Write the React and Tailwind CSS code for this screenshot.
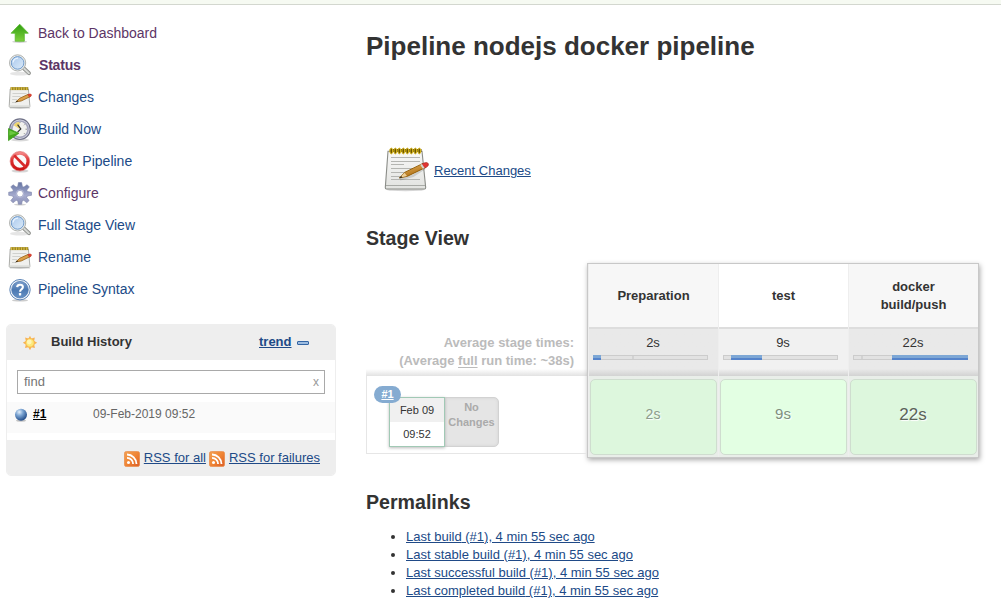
import React from "react";

const ArrowUp = () => (
  <svg width="24" height="24" viewBox="0 0 24 24" className="shrink-0">
    <defs>
      <linearGradient id="arrow" x1="0" y1="0" x2="0" y2="1">
        <stop offset="0" stopColor="#2f9e10" />
        <stop offset="1" stopColor="#7fd03c" />
      </linearGradient>
    </defs>
    <ellipse cx="11.7" cy="19.8" rx="7.5" ry="1.1" fill="#000" opacity=".18" />
    <path d="M11.7 2.2L20.3 11.2H16.3V19.2H7.2V11.2H3.1Z" fill="url(#arrow)" stroke="#56b82a" strokeWidth=".8" strokeLinejoin="round" />
  </svg>
);

const Magnifier = () => (
  <svg width="24" height="24" viewBox="0 0 24 24" className="shrink-0">
    <defs>
      <linearGradient id="lens" x1="0" y1="0" x2="1" y2="1">
        <stop offset="0" stopColor="#a9c8ec" />
        <stop offset="1" stopColor="#dcebfa" />
      </linearGradient>
    </defs>
    <ellipse cx="12" cy="19.7" rx="10" ry="1.9" fill="#000" opacity=".1" />
    <path d="M15.4 14L21 19.2" stroke="#8c8e8a" strokeWidth="3.8" strokeLinecap="round" />
    <path d="M16 14.6L20.9 19.2" stroke="#d7d9d6" strokeWidth="2" strokeLinecap="round" />
    <circle cx="9.6" cy="8.9" r="8.1" fill="#eceeec" stroke="#a8aaa7" strokeWidth=".9" />
    <circle cx="9.6" cy="8.9" r="6.3" fill="url(#lens)" stroke="#6f9acb" strokeWidth="1" />
    <path d="M5 8.5Q5.6 4.5 10 4.2" fill="none" stroke="#e9f3ff" strokeWidth="1.3" />
  </svg>
);

const SmallNotepad = () => (
  <svg width="24" height="24" viewBox="0 0 24 24" className="shrink-0">
    <ellipse cx="12" cy="21.9" rx="10.5" ry="1" fill="#000" opacity=".18" />
    <path d="M2.2 3H20.4L21.9 20.2Q21.9 21.3 21 21.3H2Q1.2 21.3 1.2 20.2Z" fill="#f0f0ee" stroke="#a3a4a0" strokeWidth=".9" />
    <path d="M1.6 19.3H21.6V21H1.6Z" fill="#dcddda" />
    <path d="M4.5 7.5H18.5M4.3 10.5H12.5M4.2 13.5H9M4 16.5H8" stroke="#d0d1ce" strokeWidth="1" />
    <path d="M2.5 2.6H20.3" stroke="#94802a" strokeWidth="3" />
    <path d="M3.5 1.2V3.9M6 1.2V3.9M8.5 1.2V3.9M11 1.2V3.9M13.5 1.2V3.9M16 1.2V3.9M18.7 1.2V3.9" stroke="#dcbf3a" strokeWidth="1.2" />
    <path d="M8 15.8L11.8 12.2L20.3 8.3L22 10.7L13.2 15Z" fill="#dda14b" stroke="#955e10" strokeWidth=".8" strokeLinejoin="round" />
    <path d="M7 16.4L9.2 14.6L10 15.6Z" fill="#29251c" />
    <path d="M19.8 8.6L21.4 8Q23.2 7.6 23.5 9Q23.5 10.3 21.5 11.2Z" fill="#e2432f" stroke="#b93229" strokeWidth=".5" />
  </svg>
);

const LargeNotepad = () => (
  <svg width="48" height="48" viewBox="0 0 48 48" className="shrink-0">
    <defs>
      <linearGradient id="paper" x1="0" y1="0" x2="0" y2="1">
        <stop offset="0" stopColor="#f8f8f7" />
        <stop offset="1" stopColor="#e2e3e0" />
      </linearGradient>
      <linearGradient id="wood" x1="0" y1="0" x2=".5" y2="1">
        <stop offset="0" stopColor="#f0bd66" />
        <stop offset="1" stopColor="#a8680f" />
      </linearGradient>
    </defs>
    <ellipse cx="23.5" cy="43.7" rx="19" ry="1.6" fill="#000" opacity=".16" />
    <path d="M6 5.2H40L43.7 41.6Q43.7 43 42.7 43H4.3Q3.3 43 3.3 41.6Z" fill="url(#paper)" stroke="#8b8d88" strokeWidth="1.1" />
    <path d="M4 39.5H43" stroke="#a8aaa6" strokeWidth="1" />
    <path d="M9 11.5H38M9 15.5H38M9 18.5H22M9 22.5H31M9 26.5H25M9 30.5H20M9 33.5H38" stroke="#b4b5b1" strokeWidth="1" />
    <path d="M7.8 4.5H39.5" stroke="#5c4b00" strokeWidth="3" />
    {[9.3, 13.3, 17.3, 21.3, 25.3, 29.3, 33.3, 37.3].map((x) => (
      <ellipse key={x} cx={x} cy="5" rx="1.4" ry="2.9" fill="#6b5600" stroke="#dcb91a" strokeWidth="1" />
    ))}
    <path d="M18 33.4L31 30L43 22" fill="none" stroke="#000" strokeWidth="2.4" opacity=".13" />
    <path d="M17.4 32L22.6 26.4L41 17.4L43.6 21.4L25.6 30.2Z" fill="url(#wood)" stroke="#8f5902" strokeWidth=".9" strokeLinejoin="round" />
    <path d="M17.6 31.8L22.5 26.8L25 30Z" fill="#edcf98" />
    <path d="M17.1 32.2L19.3 29.9L20.4 31.4Z" fill="#29251c" />
    <path d="M39.8 18L42 17Q45 15.7 46.4 17.7Q46.9 19.9 44.6 21.1L42.4 22.2Z" fill="#e23432" stroke="#a72c22" strokeWidth=".7" />
    <path d="M38.2 18.8L40 17.9L42.6 21.9L40.8 22.8Z" fill="#d5d5cf" />
  </svg>
);

const BuildClock = () => (
  <svg width="24" height="24" viewBox="0 0 24 24" className="shrink-0">
    <ellipse cx="12" cy="22.1" rx="9" ry="1.4" fill="#000" opacity=".15" />
    <circle cx="11.9" cy="11.2" r="10.3" fill="#d9dae6" stroke="#6f7187" strokeWidth="1.1" />
    <circle cx="11.9" cy="11.2" r="8.2" fill="#f1f1ee" stroke="#a5a6bd" strokeWidth="1.7" />
    <path d="M11.6 11L5.6 7.3Q7.5 3.9 11.6 3.9Z" fill="#eed46d" />
    <path d="M9.6 6.6L12.8 10.9L9.6 14.2" fill="none" stroke="#343634" strokeWidth="1.2" />
    <path d="M17.5 11.2H19M12 4.1V5M16.8 6.4L16 7.2M17 16.2L16 15.2" stroke="#92938f" />
    <path d="M.5 10.6L10.9 15.2L.5 22.6Z" fill="#43a91b" stroke="#3c9a1c" strokeWidth=".8" />
    <path d="M1.4 12.2L8.6 15.3L1.4 17.4Z" fill="#83d956" opacity=".65" />
  </svg>
);

const NoEntry = () => (
  <svg width="24" height="24" viewBox="0 0 24 24" className="shrink-0">
    <defs>
      <linearGradient id="ban" x1="0" y1="0" x2="0" y2="1">
        <stop offset="0" stopColor="#f38484" />
        <stop offset=".45" stopColor="#dc3030" />
        <stop offset="1" stopColor="#cc1515" />
      </linearGradient>
    </defs>
    <ellipse cx="12" cy="21" rx="8.5" ry="1.6" fill="#000" opacity=".16" />
    <circle cx="11.9" cy="11.2" r="8.1" fill="#fafafa" stroke="url(#ban)" strokeWidth="3.1" />
    <path d="M6.2 5.4L17.6 17" stroke="#d92b2b" strokeWidth="2.7" />
    <circle cx="11.9" cy="11.2" r="9.8" fill="none" stroke="#d85050" strokeWidth=".5" />
  </svg>
);

const Gear = () => (
  <svg width="24" height="24" viewBox="0 0 24 24" className="shrink-0">
    <defs>
      <linearGradient id="gear" x1="0" y1="0" x2="0" y2="1">
        <stop offset="0" stopColor="#6676a4" />
        <stop offset=".6" stopColor="#a6abce" />
        <stop offset="1" stopColor="#8c92b8" />
      </linearGradient>
    </defs>
    <ellipse cx="12" cy="22.6" rx="6" ry="1" fill="#000" opacity=".18" />
    <path
      fill="url(#gear)"
      stroke="#7d85ab"
      strokeWidth=".6"
      strokeLinejoin="round"
      fillRule="evenodd"
      d="M10.4 .6H13.6L14.4 4.5L15.9 5.1L19.1 2.7L21.3 4.9L18.8 8.1L19.4 9.6L23.5 10.2V13.3L19.4 14L18.7 15.5L21.1 18.6L18.8 20.8L15.8 18.3L14.2 18.9L13.6 22.3H10.4L9.8 18.9L8.2 18.3L5 20.8L2.8 18.6L5.3 15.5L4.7 14L.7 13.3V10.2L4.7 9.6L5.3 8.1L2.8 4.9L5 2.7L8.2 5.1L9.7 4.5ZM12 8.4A3.3 3.3 0 1 0 12 15A3.3 3.3 0 1 0 12 8.4Z"
    />
    <circle cx="12" cy="11.7" r="3.8" fill="none" stroke="#b9bdd9" strokeWidth=".8" />
  </svg>
);

const HelpIcon = () => (
  <svg width="24" height="24" viewBox="0 0 24 24" className="shrink-0">
    <defs>
      <linearGradient id="help" x1="0" y1="0" x2="0" y2="1">
        <stop offset="0" stopColor="#7d9fcc" />
        <stop offset=".5" stopColor="#4c79b2" />
        <stop offset="1" stopColor="#6591c5" />
      </linearGradient>
    </defs>
    <ellipse cx="12" cy="22.4" rx="8" ry="1.2" fill="#000" opacity=".2" />
    <circle cx="12" cy="11.7" r="10.2" fill="#f2f6fb" stroke="#5a83b6" strokeWidth="1" />
    <circle cx="12" cy="11.7" r="8.3" fill="url(#help)" stroke="#4874ad" strokeWidth=".7" />
    <path d="M9.1 9.2Q9.3 6.7 12 6.7Q14.9 6.7 14.9 9.1Q14.9 10.5 13.3 11.5Q12.1 12.3 12.1 13.7" fill="none" stroke="#fff" strokeWidth="2.1" />
    <rect x="10.9" y="15.1" width="2.3" height="2.3" rx=".4" fill="#fff" />
  </svg>
);

const Sun = () => (
  <svg width="16" height="16" viewBox="0 0 16 16" className="shrink-0">
    <path
      d="M8 .8L9.3 3.6L12.8 2.6L12.2 5.9L15.2 7.8L12.2 9.6L12.9 12.9L9.5 12.2L8 15.2L6.4 12.2L3 13L3.8 9.6L.8 7.8L3.8 5.9L3.1 2.6L6.5 3.5Z"
      fill="#f7b352"
    />
    <circle cx="8" cy="7.9" r="4.2" fill="#fce97a" stroke="#f9bb4c" strokeWidth=".8" />
    <circle cx="7.3" cy="7" r="2.4" fill="#fff9c4" opacity=".8" />
  </svg>
);

const BlueBall = () => (
  <svg width="14" height="14" viewBox="0 0 14 14" className="shrink-0">
    <defs>
      <radialGradient id="ball" cx=".36" cy=".28" r=".75">
        <stop offset="0" stopColor="#e3effb" />
        <stop offset=".4" stopColor="#7ca5d3" />
        <stop offset="1" stopColor="#204a87" />
      </radialGradient>
    </defs>
    <ellipse cx="7" cy="12.6" rx="5" ry="1.2" fill="#000" opacity=".22" />
    <circle cx="7" cy="6.7" r="6" fill="url(#ball)" />
  </svg>
);

const Rss = () => (
  <svg width="16" height="16" viewBox="0 0 16 16" className="shrink-0">
    <defs>
      <linearGradient id="rss" x1="0" y1="0" x2="1" y2="1">
        <stop offset="0" stopColor="#f3a153" />
        <stop offset=".5" stopColor="#ef8535" />
        <stop offset="1" stopColor="#db5c25" />
      </linearGradient>
    </defs>
    <rect x=".4" y=".4" width="15.2" height="15.2" rx="2.2" fill="url(#rss)" stroke="#ea8a45" strokeWidth=".7" />
    <circle cx="4.5" cy="11.6" r="1.5" fill="#fff" />
    <path d="M3 6.9A6.1 6.1 0 0 1 9.1 13M3 3.5A9.5 9.5 0 0 1 12.5 13" fill="none" stroke="#fff" strokeWidth="1.8" />
  </svg>
);

const tasks = [
  { label: "Back to Dashboard", Icon: ArrowUp, tone: "text-[#5c3566]" },
  { label: "Status", Icon: Magnifier, tone: "text-[#5c3566] font-bold pl-px tracking-[-0.2px]" },
  { label: "Changes", Icon: SmallNotepad, tone: "text-[#204a87]" },
  { label: "Build Now", Icon: BuildClock, tone: "text-[#204a87]" },
  { label: "Delete Pipeline", Icon: NoEntry, tone: "text-[#204a87]" },
  { label: "Configure", Icon: Gear, tone: "text-[#5c3566]" },
  { label: "Full Stage View", Icon: Magnifier, tone: "text-[#204a87]" },
  { label: "Rename", Icon: SmallNotepad, tone: "text-[#204a87]" },
  { label: "Pipeline Syntax", Icon: HelpIcon, tone: "text-[#204a87]" },
];

const stages = [
  {
    name: "Preparation",
    avg: "2s",
    size: "text-[14px] text-[#8c9c8c]",
    head: "bg-[#f7f7f7]",
    mid: "from-[#e9e9e9]",
    cell: "bg-[#ddf7dd]",
    start: 0,
    width: 8,
    tick: 38,
  },
  {
    name: "test",
    avg: "9s",
    size: "text-[15px] text-[#7f8f7f]",
    head: "bg-white",
    mid: "from-[#f1f1f1]",
    cell: "bg-[#e3ffe3]",
    start: 8,
    width: 31,
    tick: 7,
  },
  {
    name: "docker build/push",
    avg: "22s",
    size: "text-[17px] text-[#5a635a]",
    head: "bg-[#f7f7f7]",
    mid: "from-[#e9e9e9]",
    cell: "bg-[#ddf7dd]",
    start: 39,
    width: 76,
    tick: 7,
  },
];

const permalinks = ["Last build", "Last stable build", "Last successful build", "Last completed build"];

function BuildHistory() {
  return (
    <section className="mt-[19px] ml-1.5 h-[152px] w-[330px] overflow-hidden rounded-[5px] border border-[#eee] bg-white">
      <div className="flex h-[35px] items-center bg-[#eee] pl-[15px]">
        <div className="mt-px">
          <Sun />
        </div>
        <b className="mt-[-2px] ml-[13px] w-[208px] text-[13px] text-[#333]">Build History</b>
        <a className="mt-[-2px] text-[13px] font-bold text-[#204a87] underline">trend</a>
        <span className="ml-[5px] h-1 w-3 rounded-[1px] border border-[#3465a4] bg-[#9dbce0]" />
      </div>
      <div className="h-[80px] pt-[10px]">
        <div className="mx-[10px] flex h-6 items-center justify-between border border-[#a9a9a9] px-[6px] text-[13px]">
          <span className="text-[#757575]">find</span>
          <span className="mr-[-1px] text-[12px] text-[#999]">x</span>
        </div>
        <div className="mt-2 flex h-[31px] items-start bg-[#fafafa] pt-[4px] pl-[7px] text-[12px] leading-4">
          <div className="mt-[2px]">
            <BlueBall />
          </div>
          <b className="ml-[5px] w-[60px] text-black underline">#1</b>
          <span className="text-[#666]">09-Feb-2019 09:52</span>
        </div>
      </div>
      <div className="flex h-[36px] items-center justify-end bg-[#eee] pr-[15px] text-[13px] text-[#204a87]">
        <span className="mt-[2px] mr-1"><Rss /></span>
        <a className="underline">RSS for all</a>
        <span className="mt-[2px] mr-1 ml-[3px]"><Rss /></span>
        <a className="underline">RSS for failures</a>
      </div>
    </section>
  );
}

function RunSummary() {
  return (
    <div className="w-[221px] pt-16">
      <div className="flex h-[49px] flex-col items-end pt-[7px] pr-[13px] text-[13px] leading-[18px] font-bold text-[#bbb]">
        <span>Average stage times:</span>
        <span>
          (Average <span className="underline underline-offset-2">full</span> run time: ~38s)
        </span>
      </div>
      <div className="-mt-[7px] h-[7px] bg-linear-to-b from-transparent to-[#e2e2e2]" />
      <div className="relative flex h-[78px] border-b border-l border-[#e6e6e6] pt-[21px] pl-[22px]">
        <div className="z-10 flex h-[50px] w-[56px] flex-col border border-[#a1c9b5] bg-white text-center text-[11px] leading-6 text-[#333] shadow-[0_1px_3px_#bbb]">
          <span className="bg-[#f0f0f0]">Feb 09</span>
          <span>09:52</span>
        </div>
        <div className="-ml-px h-[50px] w-[55px] rounded-r-[5px] border border-[#d2d2d2] bg-[#e5e5e5] pt-[2px] text-center text-[11px] leading-[15px] font-bold text-[#aaa] shadow-[inset_0_0_3px_#d2d2d2]">
          No Changes
        </div>
        <span className="absolute top-[10px] left-[7px] z-20 flex h-[17px] w-[27px] items-center justify-center rounded-full bg-[#85abd1] text-[11px] font-bold text-white underline">
          #1
        </span>
      </div>
    </div>
  );
}

function StageColumn({ stage }) {
  return (
    <div className="w-[130px] border-l border-[#eee]">
      <div className={`flex h-[63px] items-center justify-center px-6 pt-px text-center text-[13px] leading-[18px] font-bold text-[#333] ${stage.head}`}>
        {stage.name}
      </div>
      <div className={`h-[49px] border-t-2 border-[#ddd] bg-linear-to-b from-85% to-[#d2d2d2] pt-[5px] text-center text-[13px] leading-[18px] text-[#333] ${stage.mid}`}>
        <span className="mr-px">{stage.avg}</span>
        <div className="mt-[3px] ml-1 flex h-[5px] w-[115px] border border-[#ccc] bg-[#e2e2e2]">
          <div className="relative h-[5px] w-full -translate-y-px">
            <i className="absolute top-px h-[3px] w-[2px] bg-[#d2d2d2]" style={{ left: stage.tick }} />
            <i className="absolute h-[5px] bg-linear-to-b from-[#7da7d5] from-50% to-[#5584cb] to-60%" style={{ left: stage.start - 1, width: stage.width }} />
          </div>
        </div>
      </div>
      <div className="h-[81px] bg-[#e9eee9] px-px pt-[3px]">
        <div className={`flex h-[76px] items-center justify-center rounded-[5px] border border-[#cfddcf] pr-px pb-[5px] [text-shadow:1px_1px_1px_#fff] ${stage.cell} ${stage.size}`}>
          {stage.avg}
        </div>
      </div>
    </div>
  );
}

export default function App() {
  return (
    <div className="h-[616px] w-[1001px] overflow-hidden bg-white font-['Liberation_Sans',Arial,sans-serif] text-[13px] text-[#333]">
      <header className="h-[5px] border-b border-[#d3d7cf] bg-[#f6faf2]" />
      <div className="flex">
        <aside className="w-[366px] pt-3">
          <nav>
            {tasks.map(({ label, Icon, tone }) => (
              <a key={label} className="flex h-8 items-center gap-1.5 pl-2 text-[14px]">
                <span className="mt-[2px]"><Icon /></span>
                <span className={tone}>{label}</span>
              </a>
            ))}
          </nav>
          <BuildHistory />
        </aside>
        <main>
          <h1 className="mt-[25px] h-8 text-[26px] leading-8 font-bold whitespace-nowrap">Pipeline nodejs docker pipeline</h1>
          <div className="mt-[84px] ml-4 flex h-12 items-center gap-1">
            <LargeNotepad />
            <a className="mt-[2px] text-[#204a87] underline">Recent Changes</a>
          </div>
          <h2 className="mt-[32px] h-6 text-[19.6px] leading-6 font-bold">Stage View</h2>
          <div className="mt-[13px] flex">
            <RunSummary />
            <div className="flex h-[195px] w-[392px] border border-[#c8c8c8] shadow-[1px_2px_5px_#aaa]">
              {stages.map((stage) => (
                <StageColumn key={stage.name} stage={stage} />
              ))}
            </div>
          </div>
          <h2 className="mt-[32px] h-6 text-[19.6px] leading-6 font-bold">Permalinks</h2>
          <ul className="mt-[14px] list-disc pl-10 leading-[18px]">
            {permalinks.map((name) => (
              <li key={name}>
                <a className="text-[#204a87] underline">{name} (#1), 4 min 55 sec ago</a>
              </li>
            ))}
          </ul>
        </main>
      </div>
    </div>
  );
}
